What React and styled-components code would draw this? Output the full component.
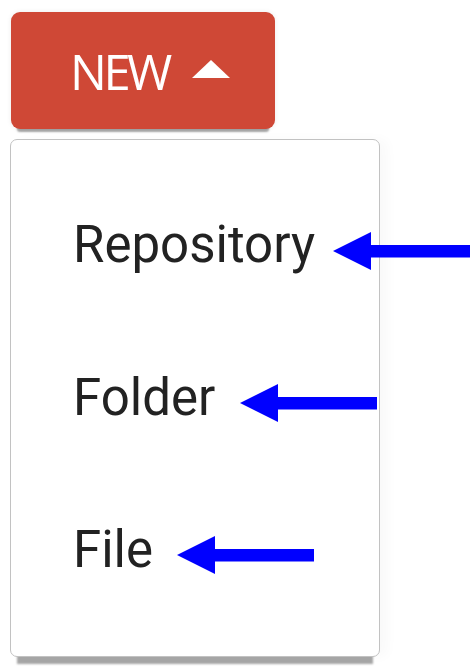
import React from "react";
import styled, { createGlobalStyle } from "styled-components";

const Global = createGlobalStyle`
  html, body { margin: 0; padding: 0; background: #ffffff; }
  body { font-family: Roboto, "Liberation Sans", sans-serif; }
`;

const Page = styled.div`
  width: 475px;
  height: 671px;
  padding: 12px 0 0 10px;
  box-sizing: border-box;
  display: flex;
  flex-direction: column;
  align-items: flex-start;
  gap: 10px;
  overflow: hidden;
`;

const NewButton = styled.button`
  margin-left: 1px;
  width: 264px;
  height: 117px;
  border: none;
  border-radius: 9px;
  background: #cf4836;
  color: #ffffff;
  display: flex;
  align-items: center;
  padding: 0 0 0 59px;
  gap: 23px;
  font-family: "Open Sans", "Liberation Sans", sans-serif;
  font-size: 49px;
  font-weight: 400;
  letter-spacing: -3.5px;
  box-shadow: 0 0 5px rgba(0, 0, 0, 0.08), 0 9px 2px -6px rgba(0, 0, 0, 0.35);
  cursor: pointer;
`;

const Caret = styled.span`
  width: 0;
  height: 0;
  border-left: 19px solid transparent;
  border-right: 19px solid transparent;
  border-bottom: 18px solid #ffffff;
  margin-top: -3px;
`;

const Menu = styled.div`
  width: 370px;
  height: 518px;
  box-sizing: border-box;
  border: 1px solid #c2c2c2;
  border-radius: 7px;
  background: #ffffff;
  padding: 28px 0 0 62px;
  display: flex;
  flex-direction: column;
  box-shadow: 0 14px 2px -7px rgba(0, 0, 0, 0.35), 8px 0 12px rgba(0, 0, 0, 0.025);
`;

const Item = styled.div`
  height: ${(p) => p.$h}px;
  display: flex;
  align-items: center;
  font-family: Roboto, "Liberation Sans", sans-serif;
  font-size: 51px;
  line-height: 1;
  color: #222222;
  white-space: nowrap;
`;

const ArrowSvg = styled.svg`
  flex: none;
  margin-left: ${(p) => p.$gap}px;
  margin-top: 12px;
`;

const Arrow = ({ gap }) => (
  <ArrowSvg $gap={gap} width="137" height="38" viewBox="0 0 137 38">
    <polygon
      points="0,19 38,0 38,13 137,13 137,25.5 38,25.5 38,38"
      fill="#0000ff"
    />
  </ArrowSvg>
);

export default function App() {
  return (
    <>
      <Global />
      <Page>
        <NewButton>
          <span>NEW</span>
          <Caret />
        </NewButton>
        <Menu>
          <Item $h={153}>
            Repository
            <Arrow gap={18} />
          </Item>
          <Item $h={152}>
            Folder
            <Arrow gap={25} />
          </Item>
          <Item $h={152}>
            File
            <Arrow gap={24} />
          </Item>
        </Menu>
      </Page>
    </>
  );
}
